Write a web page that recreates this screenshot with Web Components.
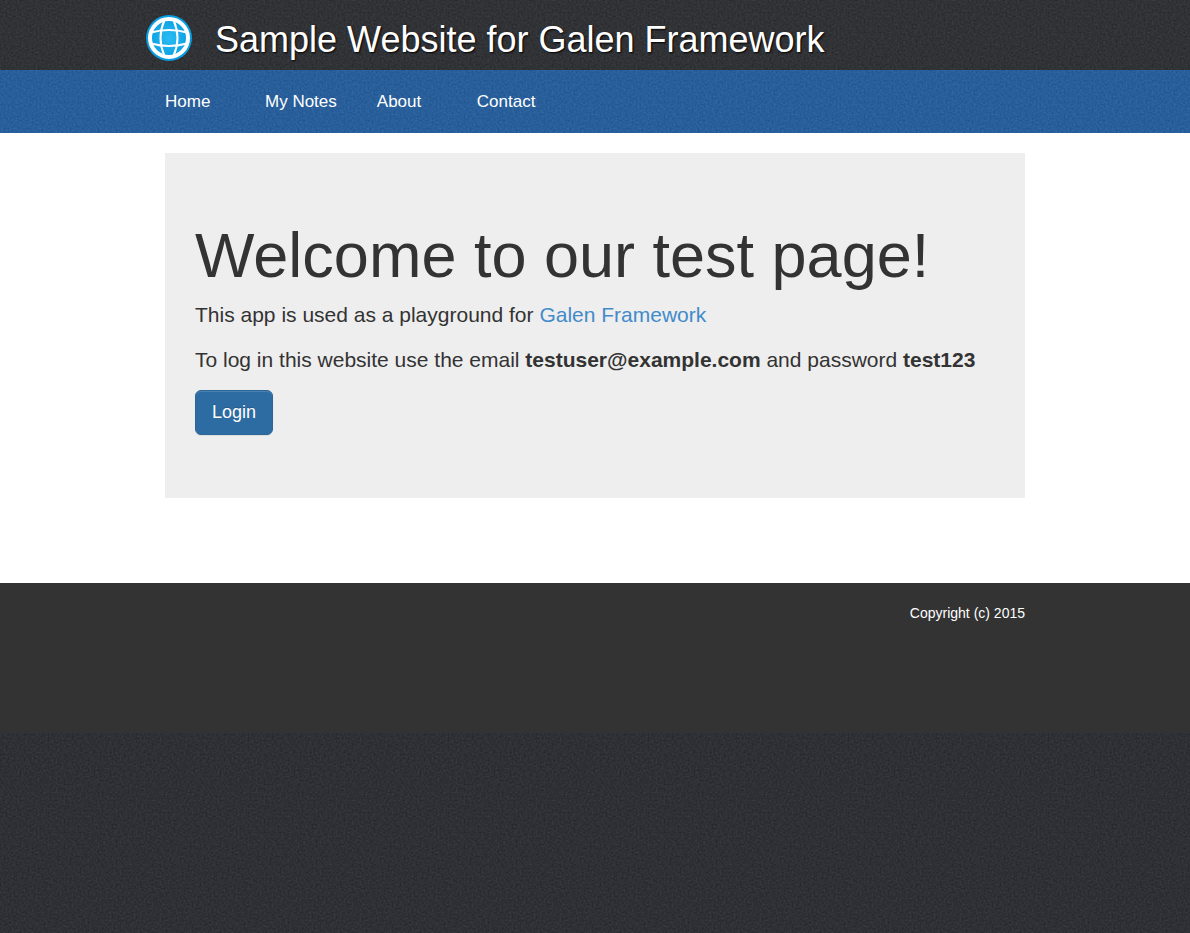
<!DOCTYPE html>
<html lang="en">
<head>
<meta charset="utf-8">
<meta name="viewport" content="width=device-width, initial-scale=1">
<title>Sample Website for Galen Framework</title>
<style>
  :root {
    --wrap: 900px;
    --gutter: 20px;
    --grain: url("data:image/svg+xml,%3Csvg xmlns='http://www.w3.org/2000/svg' width='200' height='200'%3E%3Cfilter id='n' x='0' y='0' width='100%25' height='100%25' color-interpolation-filters='sRGB'%3E%3CfeTurbulence type='fractalNoise' baseFrequency='.5' numOctaves='3' seed='4' stitchTiles='stitch'/%3E%3CfeColorMatrix values='1 0 0 0 0 1 0 0 0 0 1 0 0 0 0 0 0 0 0 .12'/%3E%3C/filter%3E%3Crect width='200' height='200' filter='url(%23n)'/%3E%3C/svg%3E");
  }
  body {
    margin: 0;
    min-height: 100vh;
    background: #24262c var(--grain);
    color: #333;
    font: 14px/20px "Liberation Sans", Arial, sans-serif;
  }
</style>
</head>
<body>
<sample-page>
  <site-header slot="header">Sample Website for Galen Framework</site-header>
  <site-nav slot="nav">
    <nav-item href="#home">Home</nav-item>
    <nav-item href="#notes">My Notes</nav-item>
    <nav-item href="#about">About</nav-item>
    <nav-item href="#contact">Contact</nav-item>
  </site-nav>
  <welcome-panel></welcome-panel>
  <site-footer slot="footer">Copyright (c) 2015</site-footer>
</sample-page>
<script>
  const define = (name, html, setup) => customElements.define(name, class extends HTMLElement {
    constructor() {
      super();
      this.attachShadow({ mode: "open" }).innerHTML = html;
    }
    connectedCallback() { if (setup) setup(this); }
  });

  define("site-logo", `
    <style>:host{display:block;flex:none;width:48px;height:48px} svg{display:block;width:100%;height:100%}</style>
    <svg viewBox="0 0 48 48" aria-hidden="true">
      <defs><radialGradient id="g"><stop offset="0" stop-color="#2bbcf2"/><stop offset="1" stop-color="#069be0"/></radialGradient></defs>
      <circle cx="24" cy="24" r="23" fill="url(#g)"/>
      <g fill="none" stroke="#fff">
        <circle cx="24" cy="24" r="19" stroke-width="4"/>
        <g stroke-width="2">
          <path d="M19.500 6Q11.500 24 19.500 42M28.500 6Q36.500 24 28.500 42"/>
          <path d="M6 18.500Q24 13.500 42 18.500M6 29.500Q24 34.500 42 29.500"/>
        </g>
      </g>
    </svg>`);

  define("site-header", `
    <style>
      :host{display:block;background:#26282c var(--grain)}
      .wrap{box-sizing:border-box;max-width:var(--wrap);min-height:70px;margin:0 auto;display:flex;align-items:center;gap:22px;padding-top:6px}
      h1{margin:0;padding-top:4px;color:#fff;font-weight:400;font-size:36px;line-height:40px;text-shadow:1px 1px 2px #000}
    </style>
    <header><div class="wrap"><site-logo></site-logo><h1><slot></slot></h1></div></header>`);

  define("nav-item", `
    <style>
      :host{display:block;box-sizing:border-box;min-width:100px;padding:0 var(--gutter)}
      a{color:#fff;text-decoration:none;font-size:17px;line-height:23px}
    </style>
    <a><slot></slot></a>`,
    el => { el.shadowRoot.querySelector("a").href = el.getAttribute("href"); });

  define("site-nav", `
    <style>
      :host{display:block;background:#1d5a9d var(--grain)}
      nav{max-width:var(--wrap);margin:0 auto;padding:20px 0;display:flex;flex-wrap:wrap}
    </style>
    <nav><slot></slot></nav>`);

  define("login-button", `
    <style>
      :host{display:inline-block}
      button{display:block;margin:0;padding:10px 16px;border:1px solid #2b669a;border-radius:6px;background:#2d6ca2;color:#fff;
        font:18px/23px "Liberation Sans",Arial,sans-serif;text-shadow:0 -1px 0 rgba(0,0,0,.2);
        box-shadow:inset 0 1px 0 rgba(255,255,255,.15),0 1px 1px rgba(0,0,0,.075);cursor:pointer}
    </style>
    <button type="button"><slot></slot></button>`);

  define("welcome-panel", `
    <style>
      :host{display:block;background:#eee;padding:68px 30px 63px}
      h2{margin:0 0 10px;font-weight:400;font-size:63px;line-height:69px}
      p{margin:0 0 15px;font-size:21px;line-height:30px}
      a{color:#428bca;text-decoration:none}
      login-button{display:block}
    </style>
    <h2>Welcome to our test page!</h2>
    <p>This app is used as a playground for <a href="#galen">Galen Framework</a></p>
    <p>To log in this website use the email <b>testuser@example.com</b> and password <b>test123</b></p>
    <login-button>Login</login-button>`);

  define("site-footer", `
    <style>
      :host{display:block;background:#333;color:#fff}
      .wrap{box-sizing:border-box;max-width:var(--wrap);min-height:150px;margin:0 auto;padding:20px var(--gutter);text-align:right}
    </style>
    <footer><div class="wrap"><slot></slot></div></footer>`);

  define("sample-page", `
    <style>
      :host{display:block}
      main{background:#fff;padding:20px 0 85px}
      .wrap{box-sizing:border-box;max-width:var(--wrap);margin:0 auto;padding:0 var(--gutter)}
    </style>
    <slot name="header"></slot>
    <slot name="nav"></slot>
    <main><div class="wrap"><slot></slot></div></main>
    <slot name="footer"></slot>`);
</script>
</body>
</html>
